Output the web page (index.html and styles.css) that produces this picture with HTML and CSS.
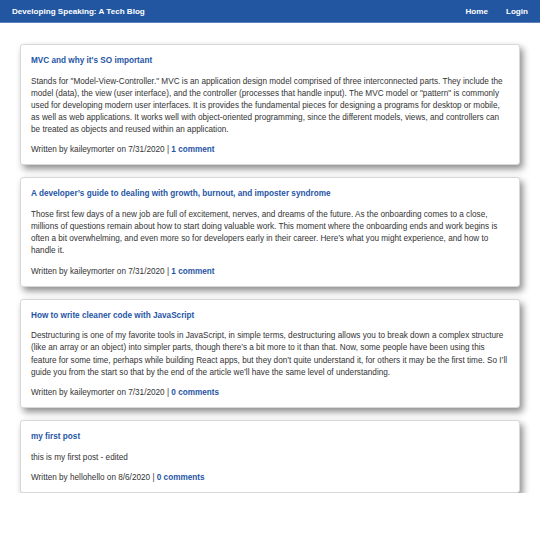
FILE: index.html
```html
<!DOCTYPE html>
<html>
<head>
<meta charset="utf-8">
<link rel="stylesheet" href="styles.css">
</head>
<body>
<header class="topbar">
  <a class="brand" href="#">Developing Speaking: A Tech Blog</a>
  <nav class="nav">
    <a href="#">Home</a>
    <a href="#">Login</a>
  </nav>
</header>
<main class="posts">
  <article class="card">
    <h2 class="title"><a href="#">MVC and why it's SO important</a></h2>
    <p class="body">Stands for "Model-View-Controller." MVC is an application design model comprised of three interconnected parts. They include the model (data), the view (user interface), and the controller (processes that handle input). The MVC model or "pattern" is commonly used for developing modern user interfaces. It is provides the fundamental pieces for designing a programs for desktop or mobile, as well as web applications. It works well with object-oriented programming, since the different models, views, and controllers can be treated as objects and reused within an application.</p>
    <p class="meta">Written by kaileymorter on 7/31/2020 | <a href="#">1 comment</a></p>
  </article>
  <article class="card">
    <h2 class="title"><a href="#">A developer’s guide to dealing with growth, burnout, and imposter syndrome</a></h2>
    <p class="body">Those first few days of a new job are full of excitement, nerves, and dreams of the future. As the onboarding comes to a close, millions of questions remain about how to start doing valuable work. This moment where the onboarding ends and work begins is often a bit overwhelming, and even more so for developers early in their career. Here’s what you might experience, and how to handle it.</p>
    <p class="meta">Written by kaileymorter on 7/31/2020 | <a href="#">1 comment</a></p>
  </article>
  <article class="card">
    <h2 class="title"><a href="#">How to write cleaner code with JavaScript</a></h2>
    <p class="body">Destructuring is one of my favorite tools in JavaScript, in simple terms, destructuring allows you to break down a complex structure (like an array or an object) into simpler parts, though there’s a bit more to it than that. Now, some people have been using this feature for some time, perhaps while building React apps, but they don’t quite understand it, for others it may be the first time. So I’ll guide you from the start so that by the end of the article we’ll have the same level of understanding.</p>
    <p class="meta">Written by kaileymorter on 7/31/2020 | <a href="#">0 comments</a></p>
  </article>
  <article class="card">
    <h2 class="title"><a href="#">my first post</a></h2>
    <p class="body">this is my first post - edited</p>
    <p class="meta">Written by hellohello on 8/6/2020 | <a href="#">0 comments</a></p>
  </article>
</main>
</body>
</html>
```
FILE: styles.css
```css
* { box-sizing: border-box; }
html, body { margin: 0; padding: 0; background: #fff; }
body {
  font-family: "Liberation Sans", Arial, Helvetica, sans-serif;
  font-size: 8.2px;
  color: #333;
}
a { text-decoration: none; }
.topbar {
  height: 23px;
  background: #2256a0;
  display: flex;
  align-items: center;
  justify-content: space-between;
  padding: 0 12px;
  border-bottom: 1px solid #5b82bd;
}
.brand {
  color: #fff;
  font-weight: bold;
  font-size: 8.1px;
}
.nav { display: flex; gap: 18px; }
.nav a {
  color: #fff;
  font-weight: bold;
  font-size: 8.1px;
}
.posts {
  display: flex;
  flex-direction: column;
  gap: 12px;
  padding: 21px 20px 0 20px;
}
.card {
  background: #fff;
  border: 1px solid #d8d8d8;
  border-radius: 3px;
  box-shadow: 3px 4px 7px rgba(0, 0, 0, 0.45);
  padding: 10px 10px 8px 10px;
}
.title {
  margin: 0 0 8.5px 0;
  font-size: 8.2px;
  line-height: 12px;
  font-weight: bold;
}
.title a { color: #1f55a5; }
.body {
  margin: 0 0 8.5px 0;
  line-height: 12.1px;
}
.meta {
  margin: 0;
  line-height: 12px;
}
.meta a { color: #1f55a5; font-weight: bold; }
```
